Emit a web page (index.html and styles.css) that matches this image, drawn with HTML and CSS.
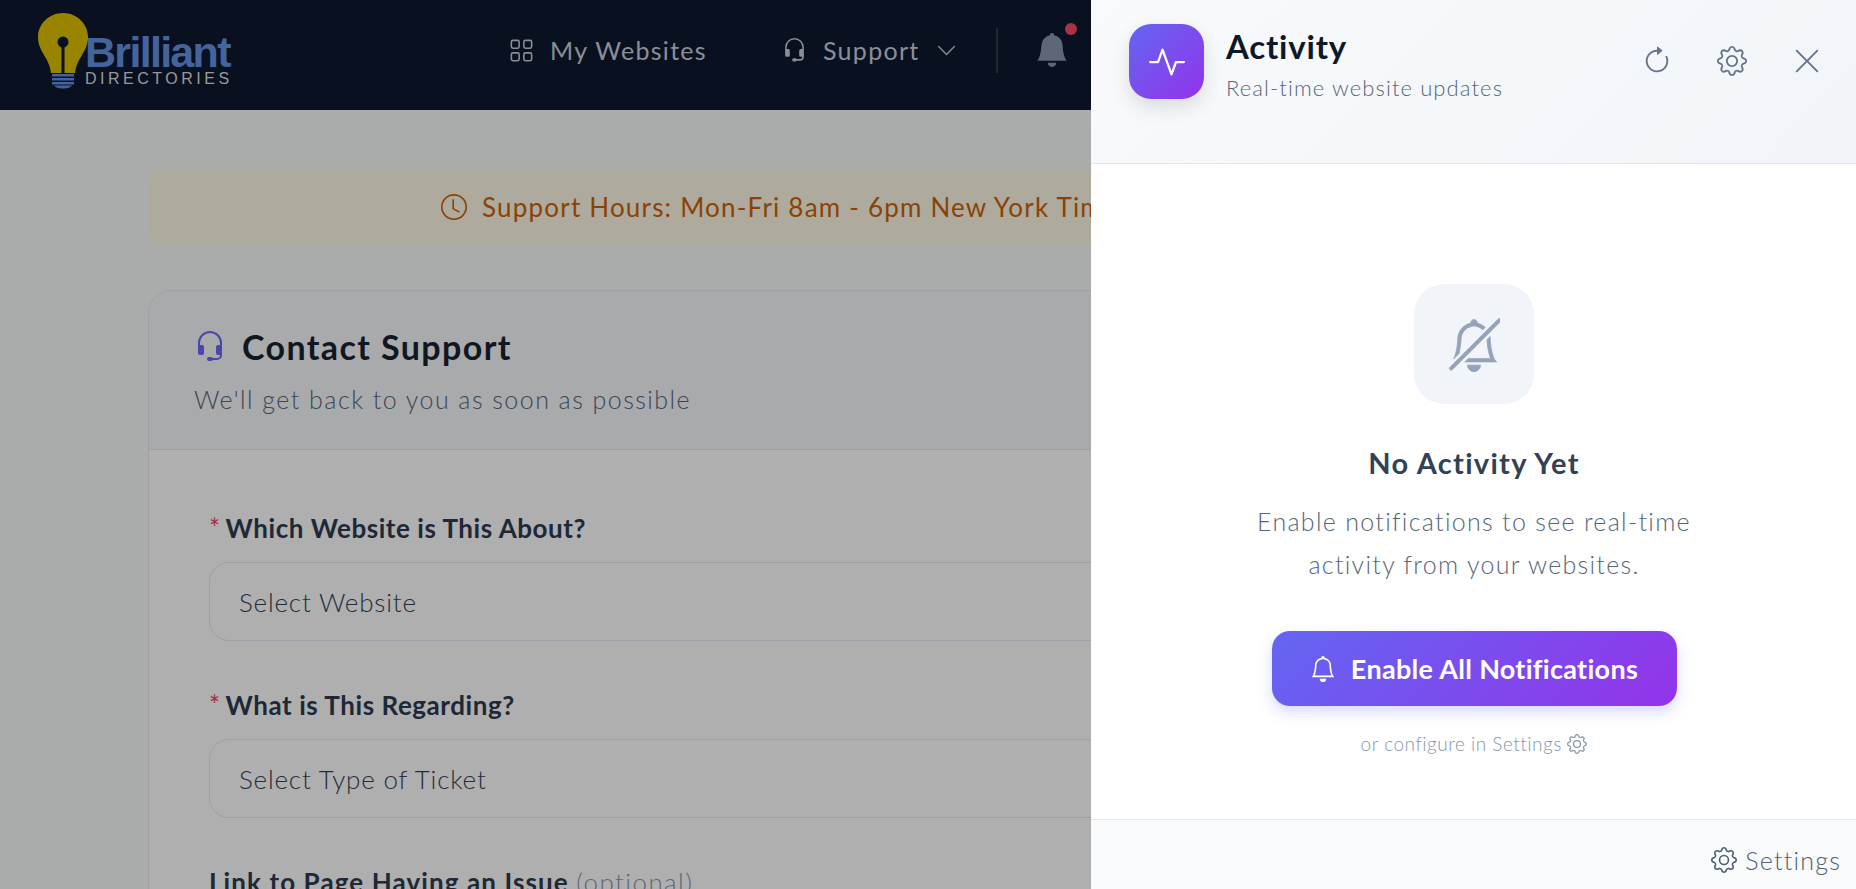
FILE: index.html
```html
<!DOCTYPE html>
<html lang="en">

<head>
    <meta charset="UTF-8">
    <meta name="viewport" content="width=device-width, initial-scale=1.0">
    <title>Contact Support</title>
    <link rel="stylesheet" href="styles.css">
</head>

<body>
    <!-- icon sprite -->
    <svg class="sprite" xmlns="http://www.w3.org/2000/svg">
        <symbol id="i-gear" viewBox="0 0 16 16">
            <path d="M8 4.754a3.246 3.246 0 1 0 0 6.492 3.246 3.246 0 0 0 0-6.492zM5.754 8a2.246 2.246 0 1 1 4.492 0 2.246 2.246 0 0 1-4.492 0z"/>
            <path d="M9.796 1.343c-.527-1.79-3.065-1.79-3.592 0l-.094.319a.873.873 0 0 1-1.255.52l-.292-.16c-1.64-.892-3.433.902-2.54 2.541l.159.292a.873.873 0 0 1-.52 1.255l-.319.094c-1.79.527-1.79 3.065 0 3.592l.319.094a.873.873 0 0 1 .52 1.255l-.16.292c-.892 1.64.901 3.434 2.541 2.54l.292-.159a.873.873 0 0 1 1.255.52l.094.319c.527 1.79 3.065 1.79 3.592 0l.094-.319a.873.873 0 0 1 1.255-.52l.292.16c1.64.893 3.434-.902 2.54-2.541l-.159-.292a.873.873 0 0 1 .52-1.255l.319-.094c1.79-.527 1.79-3.065 0-3.592l-.319-.094a.873.873 0 0 1-.52-1.255l.16-.292c.893-1.64-.902-3.433-2.541-2.54l-.292.159a.873.873 0 0 1-1.255-.52l-.094-.319zm-2.633.283c.246-.835 1.428-.835 1.674 0l.094.319a1.873 1.873 0 0 0 2.693 1.115l.291-.16c.764-.415 1.6.42 1.184 1.185l-.159.292a1.873 1.873 0 0 0 1.116 2.692l.318.094c.835.246.835 1.428 0 1.674l-.319.094a1.873 1.873 0 0 0-1.115 2.693l.16.291c.415.764-.42 1.6-1.185 1.184l-.291-.159a1.873 1.873 0 0 0-2.693 1.116l-.094.318c-.246.835-1.428.835-1.674 0l-.094-.319a1.873 1.873 0 0 0-2.692-1.115l-.292.16c-.764.415-1.6-.42-1.184-1.185l.159-.291A1.873 1.873 0 0 0 1.945 8.93l-.319-.094c-.835-.246-.835-1.428 0-1.674l.319-.094A1.873 1.873 0 0 0 3.06 4.377l-.16-.292c-.415-.764.42-1.6 1.185-1.184l.292.159a1.873 1.873 0 0 0 2.692-1.115l.094-.319z"/>
        </symbol>
        <symbol id="i-grid" viewBox="0 0 16 16">
            <path d="M1 2.5A1.5 1.5 0 0 1 2.5 1h3A1.5 1.5 0 0 1 7 2.5v3A1.5 1.5 0 0 1 5.5 7h-3A1.5 1.5 0 0 1 1 5.5v-3zM2.5 2a.5.5 0 0 0-.5.5v3a.5.5 0 0 0 .5.5h3a.5.5 0 0 0 .5-.5v-3a.5.5 0 0 0-.5-.5h-3zm6.5.5A1.5 1.5 0 0 1 10.5 1h3A1.5 1.5 0 0 1 15 2.5v3A1.5 1.5 0 0 1 13.5 7h-3A1.5 1.5 0 0 1 9 5.5v-3zm1.5-.5a.5.5 0 0 0-.5.5v3a.5.5 0 0 0 .5.5h3a.5.5 0 0 0 .5-.5v-3a.5.5 0 0 0-.5-.5h-3zM1 10.5A1.5 1.5 0 0 1 2.5 9h3A1.5 1.5 0 0 1 7 10.5v3A1.5 1.5 0 0 1 5.5 15h-3A1.5 1.5 0 0 1 1 13.5v-3zm1.5-.5a.5.5 0 0 0-.5.5v3a.5.5 0 0 0 .5.5h3a.5.5 0 0 0 .5-.5v-3a.5.5 0 0 0-.5-.5h-3zm6.5.5A1.5 1.5 0 0 1 10.5 9h3a1.5 1.5 0 0 1 1.5 1.5v3a1.5 1.5 0 0 1-1.5 1.5h-3A1.5 1.5 0 0 1 9 13.5v-3zm1.5-.5a.5.5 0 0 0-.5.5v3a.5.5 0 0 0 .5.5h3a.5.5 0 0 0 .5-.5v-3a.5.5 0 0 0-.5-.5h-3z"/>
        </symbol>
        <symbol id="i-headset" viewBox="0 0 16 16">
            <path d="M8 1a5 5 0 0 0-5 5v1h1a1 1 0 0 1 1 1v3a1 1 0 0 1-1 1H3a1 1 0 0 1-1-1V6a6 6 0 1 1 12 0v6a2.5 2.5 0 0 1-2.5 2.5H9.366a1 1 0 0 1-.866.5h-1a1 1 0 1 1 0-2h1a1 1 0 0 1 .866.5H11.5A1.5 1.5 0 0 0 13 12h-1a1 1 0 0 1-1-1V8a1 1 0 0 1 1-1h1V6a5 5 0 0 0-5-5z"/>
        </symbol>
        <symbol id="i-chevron" viewBox="0 0 16 16">
            <path d="M1.646 4.646a.5.5 0 0 1 .708 0L8 10.293l5.646-5.647a.5.5 0 0 1 .708.708l-6 6a.5.5 0 0 1-.708 0l-6-6a.5.5 0 0 1 0-.708z"/>
        </symbol>
        <symbol id="i-bell-fill" viewBox="0 0 16 16">
            <path d="M8 16a2 2 0 0 0 2-2H6a2 2 0 0 0 2 2zm.995-14.901a1 1 0 1 0-1.99 0A5.002 5.002 0 0 0 3 6c0 1.098-.5 6-2 7h14c-1.5-1-2-5.902-2-7 0-2.42-1.72-4.44-4.005-4.901z"/>
        </symbol>
        <symbol id="i-bell" viewBox="0 0 16 16">
            <path d="M8 16a2 2 0 0 0 2-2H6a2 2 0 0 0 2 2zM8 1.918l-.797.161A4.002 4.002 0 0 0 4 6c0 .628-.134 2.197-.459 3.742-.16.767-.376 1.566-.663 2.258h10.244c-.287-.692-.502-1.49-.663-2.258C12.134 8.197 12 6.628 12 6a4.002 4.002 0 0 0-3.203-3.92L8 1.917zM14.22 12c.223.447.481.801.78 1H1c.299-.199.557-.553.78-1C2.68 10.2 3 6.88 3 6c0-2.42 1.72-4.44 4.005-4.901a1 1 0 1 1 1.99 0A5.002 5.002 0 0 1 13 6c0 .88.32 4.2 1.22 6z"/>
        </symbol>
        <symbol id="i-bell-slash" viewBox="0 0 16 17">
            <path d="M5.164 14H15c-.299-.199-.557-.553-.78-1-.9-1.8-1.22-5.12-1.22-6 0-.264-.02-.523-.06-.776l-.938.938c.02.708.157 2.154.457 3.58.161.767.377 1.566.663 2.258H6.164l-1 1zm5.581-9.91a3.986 3.986 0 0 0-1.948-1.01L8 2.917l-.797.161A4.002 4.002 0 0 0 4 7c0 .628-.134 2.197-.459 3.742-.05.238-.105.479-.166.718l-1.653 1.653c.02-.037.04-.074.059-.113C2.679 11.2 3 7.88 3 7c0-2.42 1.72-4.44 4.005-4.901a1 1 0 1 1 1.99 0c.942.19 1.788.645 2.457 1.284l-.707.707zM10 15a2 2 0 1 1-4 0h4zm-9.375.625a.53.53 0 0 0 .75.75l14.75-14.75a.53.53 0 0 0-.75-.75L.625 15.625z"/>
        </symbol>
        <symbol id="i-refresh" viewBox="0 0 16 16">
            <path d="M8 3a5 5 0 1 0 4.546 2.914.5.5 0 0 1 .908-.417A6 6 0 1 1 8 2v1z"/>
            <path d="M8 4.466V.534a.25.25 0 0 1 .41-.192l2.36 1.966c.12.1.12.284 0 .384L8.41 4.658A.25.25 0 0 1 8 4.466z"/>
        </symbol>
        <symbol id="i-close" viewBox="0 0 16 16">
            <path d="M2.146 2.854a.5.5 0 1 1 .708-.708L8 7.293l5.146-5.147a.5.5 0 0 1 .708.708L8.707 8l5.147 5.146a.5.5 0 0 1-.708.708L8 8.707l-5.146 5.147a.5.5 0 0 1-.708-.708L7.293 8 2.146 2.854Z"/>
        </symbol>
        <symbol id="i-clock" viewBox="0 0 16 16">
            <path d="M8 3.5a.5.5 0 0 0-1 0V9a.5.5 0 0 0 .252.434l3.5 2a.5.5 0 0 0 .496-.868L8 8.71V3.5z"/>
            <path d="M8 16A8 8 0 1 0 8 0a8 8 0 0 0 0 16zm7-8A7 7 0 1 1 1 8a7 7 0 0 1 14 0z"/>
        </symbol>
        <symbol id="i-activity" viewBox="0 0 16 16">
            <path d="M6 2a.5.5 0 0 1 .47.33L10 12.036l1.53-4.208A.5.5 0 0 1 12 7.5h3.5a.5.5 0 0 1 0 1h-3.15l-1.88 5.17a.5.5 0 0 1-.94 0L6 3.964 4.47 8.171A.5.5 0 0 1 4 8.5H.5a.5.5 0 0 1 0-1h3.15l1.88-5.17A.5.5 0 0 1 6 2Z"/>
        </symbol>
    </svg>

    <header class="topbar">
        <a class="logo" href="javascript:;">
            <svg class="logo_bulb" viewBox="0 0 52 76" xmlns="http://www.w3.org/2000/svg">
                <path class="bulb_glass" d="M26 0C12 0 1 11 1 24c0 7 2.500 12 6 18 3 5 6 10 7 18h24c1-8 4-13 7-18 3.500-6 6-11 6-18C51 11 40 0 26 0z"/>
                <circle class="bulb_hole" cx="26" cy="29" r="5.500"/>
                <rect class="bulb_hole" x="24.500" y="30" width="3" height="30"/>
                <path class="bulb_base" d="M15 61h22v2.500H15zM15 65h22v2.500H15zM15 69h22v2.500H15zM17 72.500h18c-1.500 2-4 3-9 3s-7.500-1-9-3z"/>
            </svg>
            <span class="logo_text">
                <span class="logo_name">Brilliant</span>
                <span class="logo_sub">DIRECTORIES</span>
            </span>
        </a>
        <nav class="nav_links">
            <a class="nav_item" href="javascript:;">
                <svg class="nav_icon"><use href="#i-grid"/></svg>
                My Websites
            </a>
            <a class="nav_item" href="javascript:;">
                <svg class="nav_icon"><use href="#i-headset"/></svg>
                Support
                <svg class="nav_chevron"><use href="#i-chevron"/></svg>
            </a>
        </nav>
        <div class="nav_divider"></div>
        <div class="nav_bell">
            <svg class="nav_bell_icon"><use href="#i-bell-fill"/></svg>
            <span class="nav_dot"></span>
        </div>
    </header>

    <main class="content">
        <div class="hours">
            <svg class="hours_icon"><use href="#i-clock"/></svg>
            Support Hours: Mon-Fri 8am - 6pm New York Time
        </div>

        <section class="card">
            <div class="card_head">
                <h1 class="card_title">
                    <svg class="card_icon"><use href="#i-headset"/></svg>
                    Contact Support
                </h1>
                <p class="card_sub">We'll get back to you as soon as possible</p>
            </div>
            <form class="card_body">
                <div class="field">
                    <label class="field_label"><span class="req">*</span>Which Website is This About?</label>
                    <div class="field_select">Select Website</div>
                </div>
                <div class="field">
                    <label class="field_label"><span class="req">*</span>What is This Regarding?</label>
                    <div class="field_select">Select Type of Ticket</div>
                </div>
                <div class="field">
                    <label class="field_label field_label_wide">Link to Page Having an Issue <span class="opt">(optional)</span></label>
                </div>
            </form>
        </section>
    </main>

    <div class="scrim"></div>

    <aside class="panel">
        <div class="panel_head">
            <div class="panel_badge"><svg class="panel_badge_icon"><use href="#i-activity"/></svg></div>
            <div class="panel_titles">
                <h2 class="panel_title">Activity</h2>
                <p class="panel_sub">Real-time website updates</p>
            </div>
            <div class="panel_actions">
                <a class="panel_btn" href="javascript:;"><svg class="panel_btn_icon"><use href="#i-refresh"/></svg></a>
                <a class="panel_btn" href="javascript:;"><svg class="panel_btn_icon"><use href="#i-gear"/></svg></a>
                <a class="panel_btn" href="javascript:;"><svg class="panel_btn_icon"><use href="#i-close"/></svg></a>
            </div>
        </div>

        <div class="empty">
            <div class="empty_box"><svg class="empty_icon"><use href="#i-bell-slash"/></svg></div>
            <h3 class="empty_title">No Activity Yet</h3>
            <p class="empty_text">Enable notifications to see real-time<br>activity from your websites.</p>
            <a class="enable_btn" href="javascript:;">
                <svg class="enable_icon"><use href="#i-bell"/></svg>
                Enable All Notifications
            </a>
            <p class="empty_hint">or configure in Settings <svg class="hint_icon"><use href="#i-gear"/></svg></p>
        </div>

        <div class="panel_foot">
            <a class="foot_link" href="javascript:;">
                <svg class="foot_icon"><use href="#i-gear"/></svg>
                Settings
            </a>
        </div>
    </aside>
</body>

</html>
```

FILE: styles.css
```css
* {
    margin: 0;
    padding: 0;
    box-sizing: border-box;
}

html,
body {
    height: 889px;
    overflow: hidden;
}

body {
    font-family: "Lato", "Noto Sans", sans-serif;
    background: #f4f6f6;
    color: #1e293b;
}

a {
    text-decoration: none;
    color: inherit;
}

svg {
    fill: currentColor;
    flex-shrink: 0;
}

.sprite {
    display: none;
}

/* top bar */
.topbar {
    height: 110px;
    background: #0e172e;
    display: flex;
    align-items: center;
    padding-left: 37px;
    padding-bottom: 10px;
}

.logo {
    display: flex;
    align-items: flex-start;
    width: 193px;
    height: 76px;
    margin-top: 2px;
}

.logo_bulb {
    width: 52px;
    height: 76px;
}

.logo_text {
    display: flex;
    flex-direction: column;
    margin-left: -4px;
    margin-top: 21px;
}

.bulb_glass {
    fill: #dcbe00;
}

.bulb_hole {
    fill: #0e172e;
}

.bulb_base {
    fill: #5f8fe0;
}

.logo_name {
    font-family: "Liberation Sans", sans-serif;
    font-weight: 700;
    font-size: 43px;
    line-height: 37px;
    letter-spacing: -1.7px;
    color: #6290e0;
}

.logo_sub {
    font-family: "Liberation Sans", sans-serif;
    font-size: 16px;
    line-height: 16px;
    letter-spacing: 3.5px;
    color: #dcdcdc;
    white-space: nowrap;
}

.nav_links {
    display: flex;
    align-items: center;
    gap: 75px;
    margin-left: 279px;
    font-size: 25px;
    letter-spacing: 1.3px;
    color: #c6ccd6;
}

.nav_item {
    display: flex;
    align-items: center;
    gap: 16px;
}

.nav_icon {
    width: 25px;
    height: 25px;
}

.nav_chevron {
    width: 21px;
    height: 21px;
}

.nav_divider {
    width: 2px;
    height: 45px;
    margin-left: 39px;
    background: #2e3848;
}

.nav_bell {
    position: relative;
    margin-left: 37px;
    width: 34px;
    height: 34px;
}

.nav_bell_icon {
    width: 34px;
    height: 34px;
    color: #8794a8;
}

.nav_dot {
    position: absolute;
    top: -10px;
    right: -8px;
    width: 12px;
    height: 12px;
    border-radius: 50%;
    background: #ef4a60;
}

/* page content */
.content {
    width: 1552px;
    margin-left: 148px;
    padding-top: 59px;
}

.hours {
    height: 76px;
    display: flex;
    align-items: center;
    padding-left: 293px;
    gap: 15px;
    border-radius: 14px;
    background: #f9f5e3;
    color: #c86008;
    font-size: 26px;
    letter-spacing: 1.2px;
}

.hours_icon {
    width: 26px;
    height: 26px;
}

.card {
    margin-top: 45px;
    border: 1px solid #e2e4f0;
    border-radius: 24px;
    background: #fbfbfb;
}

.card_head {
    height: 159px;
    padding: 34px 45px 0;
    border-bottom: 1px solid #e2e4ec;
    border-radius: 24px 24px 0 0;
    background: #f3f4f7;
}

.card_title {
    display: flex;
    align-items: center;
    gap: 16px;
    font-size: 34px;
    font-weight: 700;
    line-height: 44px;
    letter-spacing: 1.4px;
    color: #17212f;
}

.card_icon {
    width: 32px;
    height: 32px;
    color: #6b66f2;
}

.card_sub {
    margin-top: 15px;
    font-size: 25px;
    font-weight: 300;
    letter-spacing: 1.46px;
    color: #566579;
}

.card_body {
    padding: 61px 60px 0;
}

.field {
    margin-bottom: 47px;
}

.field_label {
    display: block;
    font-size: 26px;
    font-weight: 700;
    line-height: 34px;
    letter-spacing: 0.55px;
    margin-bottom: 17px;
    color: #2b3a50;
}

.field_label_wide {
    letter-spacing: 1.1px;
}

.req {
    color: #f2405c;
    margin-right: 5px;
    font-weight: 400;
    font-size: 26px;
}

.opt {
    font-weight: 300;
    letter-spacing: 1.4px;
    color: #8793a6;
}

.field_select {
    height: 79px;
    display: flex;
    align-items: center;
    padding-left: 29px;
    border: 1px solid #e2e4f0;
    border-radius: 20px;
    font-size: 26px;
    font-weight: 300;
    letter-spacing: 0.8px;
    color: #334155;
}

.scrim {
    position: fixed;
    inset: 0;
    background: rgba(0, 0, 0, 0.3);
}

/* activity panel */
.panel {
    position: fixed;
    top: 0;
    right: 0;
    bottom: 0;
    width: 765px;
    display: flex;
    flex-direction: column;
    background: #fff;
}

.panel_head {
    height: 164px;
    flex-shrink: 0;
    display: flex;
    align-items: flex-start;
    padding: 24px 24px 0 38px;
    border-bottom: 1px solid #e2e8f0;
    background: linear-gradient(135deg, #f8fafc, #f1f5f9);
}

.panel_badge {
    width: 75px;
    height: 75px;
    display: flex;
    align-items: center;
    justify-content: center;
    border-radius: 22px;
    background: linear-gradient(135deg, #6366f1, #9333ea);
    box-shadow: 0 8px 20px rgba(0, 0, 0, 0.12);
    color: #fff;
}

.panel_badge_icon {
    width: 36px;
    height: 36px;
}

.panel_titles {
    margin-left: 22px;
}

.panel_title {
    font-size: 33px;
    font-weight: 700;
    line-height: 44px;
    letter-spacing: 0.8px;
    color: #0f172a;
}

.panel_sub {
    margin-top: 5px;
    font-size: 22px;
    font-weight: 300;
    line-height: 30px;
    letter-spacing: 1.1px;
    color: #566579;
}

.panel_actions {
    margin-left: auto;
    margin-top: 12px;
    display: flex;
    gap: 25px;
}

.panel_btn {
    width: 50px;
    height: 50px;
    display: flex;
    align-items: center;
    justify-content: center;
    color: #64748b;
}

.panel_btn_icon {
    width: 30px;
    height: 30px;
}

.empty {
    flex: 1;
    display: flex;
    flex-direction: column;
    align-items: center;
    padding: 120px 0 0 1px;
    text-align: center;
}

.empty_box {
    width: 120px;
    height: 120px;
    display: flex;
    align-items: center;
    justify-content: center;
    border-radius: 30px;
    background: #f1f5f9;
    color: #94a3b8;
}

.empty_icon {
    width: 52px;
    height: 56px;
    stroke: currentColor;
    stroke-width: 0.25;
}

.empty_title {
    margin-top: 40px;
    font-size: 29px;
    font-weight: 700;
    line-height: 38px;
    letter-spacing: 1.3px;
    color: #334155;
}

.empty_text {
    margin-top: 18px;
    font-size: 25px;
    font-weight: 300;
    line-height: 43px;
    letter-spacing: 1.3px;
    color: #566579;
}

.enable_btn {
    width: 405px;
    height: 75px;
    margin-top: 45px;
    display: flex;
    align-items: center;
    justify-content: center;
    gap: 15px;
    border-radius: 18px;
    background: linear-gradient(135deg, #6366f1, #9333ea);
    box-shadow: 0 6px 14px rgba(99, 102, 241, 0.25);
    color: #fff;
    font-size: 27px;
    font-weight: 700;
    letter-spacing: 0.3px;
}

.enable_icon {
    width: 26px;
    height: 26px;
}

.empty_hint {
    margin-top: 24px;
    font-size: 19px;
    font-weight: 300;
    line-height: 28px;
    letter-spacing: 0.5px;
    color: #8495ab;
}

.hint_icon {
    width: 20px;
    height: 20px;
    vertical-align: -3px;
}

.panel_foot {
    height: 70px;
    flex-shrink: 0;
    display: flex;
    align-items: center;
    justify-content: flex-end;
    padding: 11px 15px 0 0;
    border-top: 1px solid #e2e8f0;
    background: #f8fafc;
}

.foot_link {
    display: flex;
    align-items: center;
    gap: 8px;
    font-size: 25px;
    font-weight: 300;
    letter-spacing: 1.2px;
    color: #4f5f75;
}

.foot_icon {
    width: 26px;
    height: 26px;
}
```
